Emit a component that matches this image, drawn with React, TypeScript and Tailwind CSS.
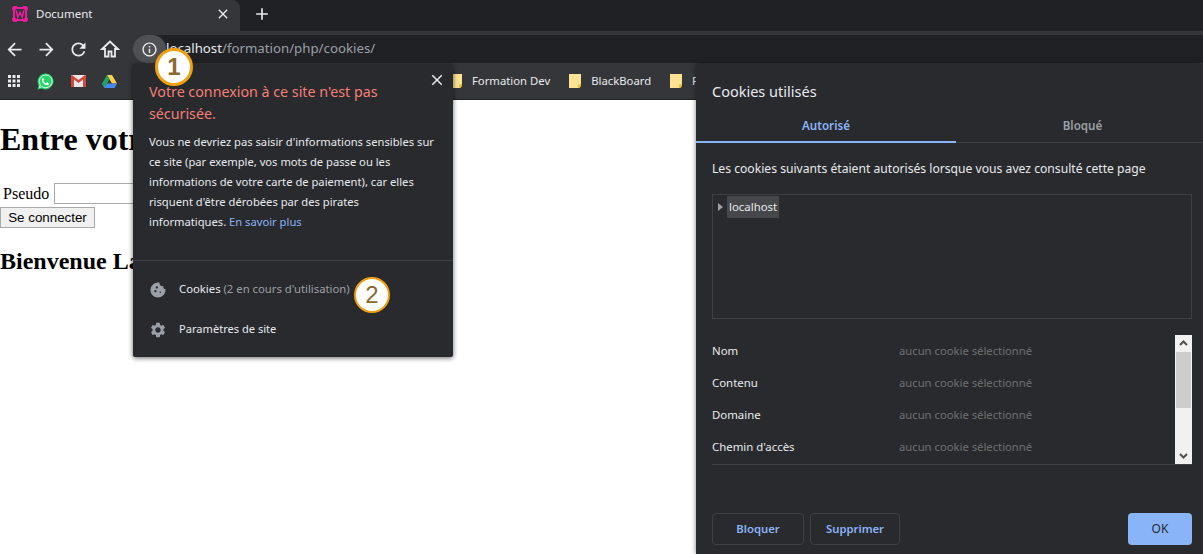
import React from "react";
import { MdArrowBack, MdArrowForward, MdRefresh, MdApps, MdClose, MdAdd, MdInfoOutline, MdCookie, MdSettings } from "react-icons/md";

const ui = "font-['Noto_Sans','Open_Sans',sans-serif]";

function Note() {
  return (
    <svg width="12" height="14" viewBox="0 0 12 14" className="shrink-0">
      <path d="M0 0H12V10L9 14H0Z" fill="#fde293" />
      <path d="M9 14V10.5H12V12L10.5 14Z" fill="#f0c040" />
    </svg>
  );
}

function Favicon() {
  return (
    <svg width="18" height="18" viewBox="0 0 18 18" className="shrink-0 -ml-[1px]">
      <path d="M4 1h2v1h6V1h2a3 3 0 0 1 3 3v1h-1v8h1v1a3 3 0 0 1-3 3h-2v-1H6v1H4a3 3 0 0 1-3-3v-1h1V5H1V4a3 3 0 0 1 3-3z" fill="#ec1c9c" />
      <rect x="4" y="4" width="10" height="10" rx="2" fill="#35363a" />
      <path d="M5.2 5.5l1.6 6.5L9 7.5l2.2 4.5 1.6-6.5" stroke="#ec1c9c" strokeWidth="1.5" fill="none" />
    </svg>
  );
}

function Home() {
  return (
    <svg width="20" height="20" viewBox="0 0 20 20" className="text-[#e8eaed]">
      <path d="M10 2.5 2.2 10H5v7.5h3.5v-5h3v5H15V10h2.8Z" fill="none" stroke="currentColor" strokeWidth="1.8" strokeLinejoin="miter" />
    </svg>
  );
}

function WhatsApp() {
  return (
    <svg width="17" height="17" viewBox="0 0 17 17">
      <path d="M8.6.4a8 8 0 0 0-6.9 12L.5 16.6l4.3-1.1A8 8 0 1 0 8.6.4z" fill="#25d366" />
      <path d="M8.6 2a6.4 6.4 0 0 0-5.4 9.8l-.7 2.7 2.8-.7A6.4 6.4 0 1 0 8.6 2z" fill="#25d366" stroke="#fff" strokeWidth="0.8" />
      <path d="M6.300 4.900c-.6 0-1.500.8-1.500 2.100 0 1.500 1 2.800 1.800 3.600.9.900 2.300 1.700 3.600 1.700 1.200 0 2-.9 2-1.600 0-.3-.1-.4-.3-.5l-1.500-.8c-.3-.1-.4 0-.6.200l-.5.700c-.1.100-.3.200-.5.100-1.100-.5-2-1.300-2.500-2.400-.1-.2 0-.3.100-.5l.5-.6c.1-.2.100-.3 0-.5l-.6-1.300c-.1-.2-.2-.2-.4-.2z" fill="#fff" />
    </svg>
  );
}

function Gmail() {
  return (
    <svg width="15" height="12" viewBox="0 0 15 12">
      <rect width="15" height="12" rx="1" fill="#e8e8e8" />
      <path d="M0 1v11h3V4.500L7.500 8 12 4.500V12h3V1l-1-1L7.500 5 1 0Z" fill="#d04a3c" />
    </svg>
  );
}

function Drive() {
  return (
    <svg width="15" height="13" viewBox="0 0 15 13">
      <path d="M5 0h5l5 8.600h-5Z" fill="#ffd04b" />
      <path d="M2.500 8.600H15L12.500 13H2.500L0 8.600Z" fill="#4688f4" />
      <path d="M5 0 7.500 4.300 2.500 13 0 8.600Z" fill="#1fa463" />
    </svg>
  );
}

function Badge({ n, className }: { n: string; className: string }) {
  return (
    <div className={`absolute z-30 flex items-center justify-center rounded-full bg-white text-[24px] text-[#8a6a30] font-['Liberation_Sans',sans-serif] ${className}`}>
      {n}
    </div>
  );
}

function Bookmark({ label, className = "" }: { label: string; className?: string }) {
  return (
    <div className={`flex items-center gap-[10px] text-[11.3px] text-[#e8eaed] ${className}`}>
      <Note />
      <span>{label}</span>
    </div>
  );
}

function Field({ label }: { label: string }) {
  return (
    <div className="flex h-[32px] items-center">
      <span className="w-[187px] text-[11.4px] text-[#e8eaed]">{label}</span>
      <span className="text-[11.25px] text-[#6f7074]">aucun cookie sélectionné</span>
    </div>
  );
}

export default function App() {
  return (
    <div className={`relative flex h-[554px] w-[1203px] flex-col overflow-hidden bg-white ${ui}`}>
      <header className="flex flex-col">
        <div className="flex h-[31px] bg-[#202124]">
          <div className="flex w-[240px] items-center rounded-tr-lg bg-[#35363a] pb-[3px] pl-[12px] pr-[9px]">
            <Favicon />
            <span className="ml-[7px] flex-1 text-[11.5px] text-[#e8eaed]">Document</span>
            <MdClose size={16} className="text-[#e8eaed]" />
          </div>
          <MdAdd size={20} className="ml-[12px] mt-[4px] text-[#e8eaed]" />
        </div>
        <div className="flex h-[36px] items-center gap-[11px] bg-[#35363a] pl-[4px]">
          <MdArrowBack size={21} className="text-[#e8eaed]" />
          <MdArrowForward size={21} className="text-[#e8eaed]" />
          <MdRefresh size={21} className="text-[#e8eaed]" />
          <Home />
          <div className="ml-[2px] flex h-[28px] flex-1 items-center rounded-l-full bg-[#202124]">
            <div className="flex h-[28px] w-[33px] items-center justify-center rounded-full bg-[#4f5053]">
              <MdInfoOutline size={17} className="text-[#e8eaed]" />
            </div>
            <span className="text-[13.25px] text-[#e8eaed]">localhost<span className="text-[#9aa0a6]">/formation/php/cookies/</span></span>
          </div>
        </div>
        <div className="flex h-[33px] items-center border-b border-[#202124] bg-[#35363a] pb-[4px] pl-[5px]">
          <MdApps size={18} className="text-[#e8eaed]" />
          <div className="ml-[14px] flex"><WhatsApp /></div>
          <div className="ml-[17px] flex"><Gmail /></div>
          <div className="ml-[16px] flex"><Drive /></div>
          <div className="ml-[333px] flex items-center">
            <Bookmark label="Formation Dev" />
            <Bookmark label="BlackBoard" className="ml-[19px]" />
            <Bookmark label="P" className="ml-[19px]" />
          </div>
        </div>
      </header>

      <main className="flex-1 font-['Liberation_Serif',serif] text-black">
        <h1 className="mt-[21px] text-[32px] font-bold leading-[37px]">Entre votre pseudo</h1>
        <div className="mt-[25px] flex items-center pl-[3px] text-[16px] leading-[20px]">
          Pseudo
          <input className="ml-[5px] h-[21px] w-[170px] border border-[#a9a9a9] bg-white" />
        </div>
        <button className="mt-[3px] block h-[21px] w-[95px] border border-[#a9a9a9] bg-[#f0f0f0] text-center text-[13.33px] font-['Liberation_Sans',sans-serif]">Se connecter</button>
        <h2 className="mt-[20px] text-[24px] font-bold leading-[27px]">Bienvenue Laurent</h2>
      </main>

      {/* Site info popover */}
      <div className="absolute left-[133px] top-[64px] z-20 flex h-[293px] w-[320px] flex-col rounded-[2px] bg-[#292a2d] shadow-[0_1px_5px_rgba(0,0,0,0.6)]">
        <MdClose size={18} className="absolute right-[7px] top-[7px] text-[#e8eaed]" />
        <div className="h-[197px] border-b border-[#3f4043] px-[16px] pt-[17px]">
          <p className="text-[14.25px] leading-[22px] text-[#f47f76]">Votre connexion à ce site n'est pas sécurisée.</p>
          <p className="mt-[7px] text-[11.2px] leading-[20px] text-[#e8eaed]">
            Vous ne devriez pas saisir d'informations sensibles sur ce site (par exemple, vos mots de passe ou les informations de votre carte de paiement), car elles risquent d'être dérobées par des pirates informatiques. <span className="text-[#8ab4f8]">En savoir plus</span>
          </p>
        </div>
        <div className="flex h-[40px] items-center pl-[16px] pt-[17px] text-[11.3px] text-[#e8eaed]">
          <MdCookie size={18} className="text-[#9aa0a6]" />
          <span className="ml-[12px]">Cookies <span className="text-[#9aa0a6]">(2 en cours d'utilisation)</span></span>
        </div>
        <div className="flex h-[40px] items-center pl-[16px] pt-[17px] text-[11.1px] text-[#e8eaed]">
          <MdSettings size={18} className="text-[#9aa0a6]" />
          <span className="ml-[12px]">Paramètres de site</span>
        </div>
      </div>

      <Badge n="1" className="left-[155px] top-[48px] h-[38px] w-[38px] border-[3px] border-[#f0a010] font-bold" />
      <Badge n="2" className="left-[354px] top-[277px] h-[36px] w-[36px] border-2 border-[#f0a010]" />

      {/* Cookies dialog */}
      <div className="absolute left-[696px] top-[64px] z-10 flex h-[490px] w-[507px] flex-col bg-[#292a2d] shadow-[0_0_5px_rgba(0,0,0,0.5)]">
        <h3 className="mt-[17px] pl-[16px] text-[14.5px] leading-[20px] text-[#e8eaed]">Cookies utilisés</h3>
        <div className="mt-[15px] flex h-[27px] border-b border-[#3f4043] text-[11.6px] font-semibold">
          <div className="h-[27px] w-[260px] border-b-2 border-[#8ab4f8] text-center leading-[19px] text-[#8ab4f8]">Autorisé</div>
          <div className="flex-1 pl-[6px] text-center leading-[19px] text-[#9aa0a6]">Bloqué</div>
        </div>
        <p className="mt-[16px] pl-[16px] text-[12.15px] leading-[20px] text-[#e8eaed]">Les cookies suivants étaient autorisés lorsque vous avez consulté cette page</p>
        <div className="ml-[16px] mr-[11px] mt-[15px] h-[125px] border border-[#3f4043] pl-[5px] pt-[1px]">
          <div className="flex items-center">
            <span className="h-0 w-0 border-y-[4px] border-l-[5px] border-y-transparent border-l-[#9aa0a6]" />
            <span className="ml-[4px] bg-[#46474a] px-[2px] text-[11.4px] leading-[22px] text-[#e8eaed]">localhost</span>
          </div>
        </div>
        <div className="ml-[16px] mr-[11px] mt-[16px] flex h-[130px] border-b border-[#3f4043]">
          <div className="flex-1">
            <Field label="Nom" />
            <Field label="Contenu" />
            <Field label="Domaine" />
            <Field label="Chemin d'accès" />
          </div>
          <div className="flex h-[129px] w-[17px] flex-col items-center bg-[#f1f1f1] text-[#505050]">
            <svg width="17" height="17" viewBox="0 0 17 17"><path d="M5 10l3.500-3.500L12 10" stroke="#505050" strokeWidth="2" fill="none" /></svg>
            <div className="h-[56px] w-[15px] bg-[#cdcdcd]" />
            <div className="flex-1" />
            <svg width="17" height="17" viewBox="0 0 17 17"><path d="M5 7l3.500 3.500L12 7" stroke="#505050" strokeWidth="2" fill="none" /></svg>
          </div>
        </div>
        <div className="ml-[16px] mr-[11px] mt-[48px] flex gap-[6px] text-[11.3px] font-semibold">
          <button className="h-[32px] w-[92px] rounded-[4px] border border-[#3f4043] text-[#8ab4f8]">Bloquer</button>
          <button className="h-[32px] w-[90px] rounded-[4px] border border-[#3f4043] text-[#8ab4f8]">Supprimer</button>
          <button className="ml-auto h-[32px] w-[64px] rounded-[4px] bg-[#8ab4f8] text-[12px] font-normal text-[#292a2d]">OK</button>
        </div>
      </div>
    </div>
  );
}
